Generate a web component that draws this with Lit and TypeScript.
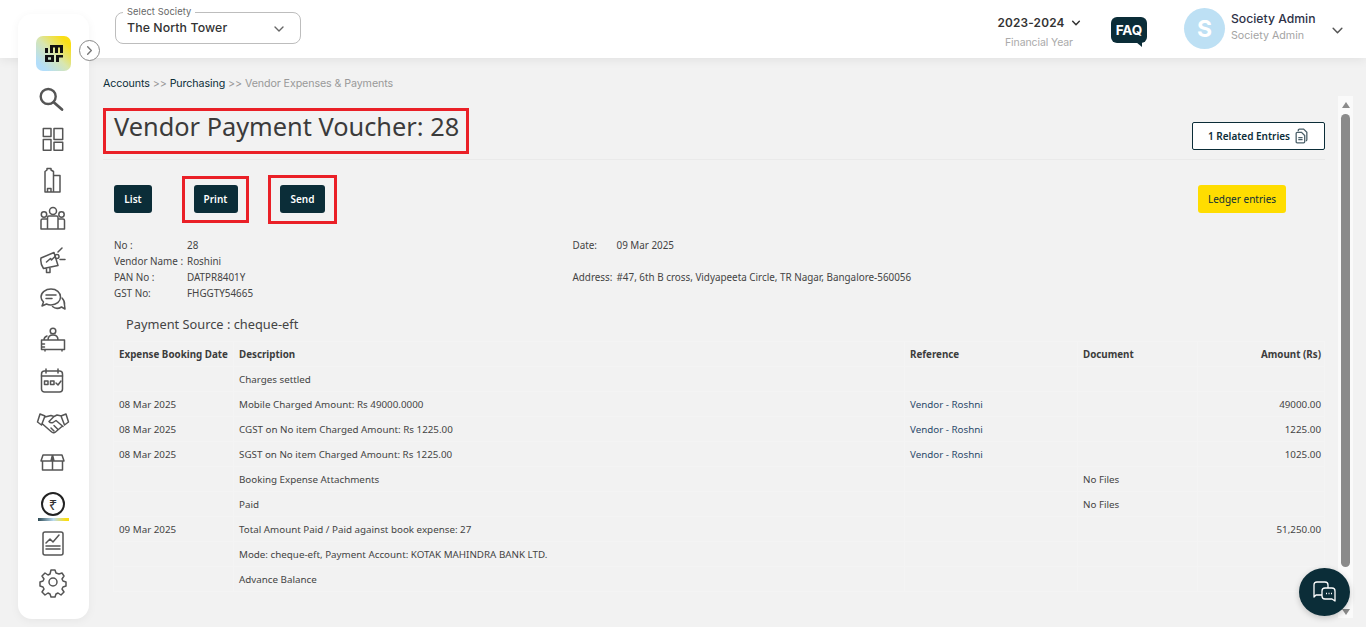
import { LitElement, html, css, svg } from "lit";
import { customElement } from "lit/decorators.js";

const chev = (w: number, sw = 1.6, c = "#333") => html`<svg width=${w} height=${w} viewBox="0 0 12 12" fill="none" stroke=${c} stroke-width=${sw} stroke-linecap="round" stroke-linejoin="round"><path d="M2 4l4 4 4-4"/></svg>`;

const icons = [
  svg`<circle cx="10.200" cy="12.500" r="7.500" stroke-width="2.400"/><path d="M16 18.500l8 7" stroke-width="2.800"/>`,
  svg`<rect x="5.300" y="4.500" width="7.700" height="8"/><rect x="16" y="4.500" width="8.700" height="11"/><rect x="5.300" y="15.500" width="7.700" height="10.700"/><rect x="16" y="18.200" width="8.700" height="8"/>`,
  svg`<path d="M7 27V6.500l2-1.500V3.500h4V5l2.500 1.500V27zM15.500 10.500H22V27h-6.500M7 27h15M9.500 27v-3.500h3.500V27"/>`,
  svg`<circle cx="15" cy="6" r="3.500"/><circle cx="6" cy="9.500" r="2.700"/><circle cx="23.500" cy="9.500" r="2.700"/><path d="M3 24v-8.500q0-1.500 1.500-1.500H9M26.500 24v-8.500q0-1.500-1.500-1.500h-4.500M9.500 24V12.500q0-1.500 1.500-1.500h7.500q1.500 0 1.500 1.500V24M3 24h23.500"/>`,
  svg`<path d="M3 13l13-5.500 4 13-14.500 3q-3.500-5-2.500-10.500zM8.500 23.500v4h3.500v-5M8.500 17l4-3.500 1 1.500 3-3M20 7l4-4M22 14.500h5"/><circle cx="19" cy="11.500" r="2"/>`,
  svg`<path d="M13 3c5.500 0 9.500 3.500 9.500 8s-4 8-9.500 8q-2.500 0-4.500-1l-4.500 2 1.500-4q-2.500-2.500-2.500-5c0-4.500 4.500-8 10-8zM8 9h10M8 12.500h6"/><path d="M24 12q3 3 2.500 7l.5 4-3.500-2q-5 3-9-.5"/>`,
  svg`<circle cx="15" cy="5" r="2.800"/><path d="M10 14q0-5 5-5t5 5M9 10q-3 1-3 4M3.500 14h23v9.500h-23zM3.500 18h3M3.500 21h3M7 23.500V25M24 23.500V25"/>`,
  svg`<rect x="3.500" y="5" width="21" height="21" rx="3"/><path d="M8 3v4M20 3v4M3.500 10h21"/><rect x="6.500" y="15" width="3.500" height="3.500"/><rect x="12.500" y="15" width="3.500" height="3.500"/><path d="M18 17l2 2 3-4"/>`,
  svg`<path d="M2 7l5 2-3.500 9L-.500 15zM28 7l-5 2 3.500 9 4-3zM7 10l6-1.500 3 1 3-1.500 4.500 1M16 9.500l-5 5q1.500 2 4 1l3-2 7 6M4.500 17l8 7q3 3 5 1l7-6M13 21l3 3M16 18.500l3.500 3.500" />`,
  svg`<path d="M5 8h19l2 6H3zM4.500 14v9h20v-9M14.500 8v15M14.500 8l-1.500 6M14.500 8l1.500 6"/>`,
];

const rows: [string, string, string, string, string][] = [
  ["", "Charges settled", "", "", ""],
  ["08 Mar 2025", "Mobile Charged Amount: Rs 49000.0000", "Vendor - Roshni", "", "49000.00"],
  ["08 Mar 2025", "CGST on No item Charged Amount: Rs 1225.00", "Vendor - Roshni", "", "1225.00"],
  ["08 Mar 2025", "SGST on No item Charged Amount: Rs 1225.00", "Vendor - Roshni", "", "1025.00"],
  ["", "Booking Expense Attachments", "", "No Files", ""],
  ["", "Paid", "", "No Files", ""],
  ["09 Mar 2025", "Total Amount Paid / Paid against book expense: 27", "", "", "51,250.00"],
  ["", "Mode: cheque-eft, Payment Account: KOTAK MAHINDRA BANK LTD.", "", "", ""],
  ["", "Advance Balance", "", "", ""],
];

@customElement("app-root")
export class AppRoot extends LitElement {
  static styles = css`
    :host { display: block; height: 627px; width: 1366px; overflow: hidden; position: relative; background: #f2f2f2; font-family: "Noto Sans", sans-serif; color: #3c3c3c; }
    * { box-sizing: border-box; }
    header { height: 58px; background: #fff; box-shadow: 0 2px 10px rgba(0,0,0,.07); display: flex; align-items: center; padding-left: 115px; position: relative; }
    .select { width: 186px; height: 32px; margin-top: -2px; border: 1px solid #bdbdbd; border-radius: 8px; position: relative; display: flex; align-items: center; justify-content: space-between; padding: 0 15px 2px 11px; font: 500 12.300px Inter, sans-serif; color: #333; letter-spacing: .1px; }
    .select label { position: absolute; left: 7px; top: -7px; background: #fff; padding: 0 4px; font: 400 9.300px Inter, sans-serif; color: #666; line-height: 11px; }
    .select svg { margin-top: 3px; }
    .fy { width: 90px; display: flex; flex-direction: column; align-items: center; }
    .fyw { margin-left: auto; margin-top: 4px; margin-right: 27px; }
    .fy .y { display: flex; align-items: center; gap: 6px; font: 600 11.800px Inter, sans-serif; color: #333; letter-spacing: .2px; height: 18px; }
    .fy .s { font: 400 10.500px Inter, sans-serif; color: #aaa; margin-top: 4px; letter-spacing: -.1px; }
    .faq { width: 36px; height: 26px; margin-right: 37px; margin-top: 2px; position: relative; background: #0b2d38; border-radius: 6px; color: #fff; font: 700 13.500px Inter, sans-serif; display: flex; align-items: center; justify-content: center; }
    .faq::after { content: ""; position: absolute; right: 5px; bottom: -4px; border-left: 6px solid transparent; border-top: 5px solid #0b2d38; }
    .avatar { width: 41px; height: 41px; margin-top: -1px; border-radius: 50%; background: #bde0f4; color: #fff; font: 700 23px Inter, sans-serif; display: flex; align-items: center; justify-content: center; }
    .who { margin-left: 6px; width: 100px; display: flex; flex-direction: column; margin-top: -4px; }
    .who b { font: 500 12.200px Inter, sans-serif; color: #2e3147; line-height: 17px; }
    .who i { font: 400 10.700px Inter, sans-serif; color: #a4a4a4; line-height: 17px; font-style: normal; }
    .userchev { margin-right: 22px; margin-top: 2px; display: flex; }

    .side { position: absolute; left: 18px; top: 14px; width: 71px; height: 605px; background: #fff; border-radius: 14px; box-shadow: 0 2px 10px rgba(0,0,0,.05); display: flex; flex-direction: column; align-items: center; padding-top: 22px; }
    .logo { width: 35px; height: 35px; border-radius: 7px; background: linear-gradient(45deg, #b3defa 15%, #d8e6b0 50%, #fade15 85%); display: flex; align-items: center; justify-content: center; }
    .toggle { position: absolute; left: 61px; top: 26px; width: 21px; height: 21px; border: 1px solid #888; border-radius: 50%; background: #fff; display: flex; align-items: center; justify-content: center; }
    .nav { margin: 13px 1px 0 0; display: flex; flex-direction: column; align-items: center; gap: 10.350px; }
    .nav svg, .lower svg { display: block; width: 30px; height: 30px; fill: none; stroke: #555; stroke-width: 1.500; stroke-linejoin: round; stroke-linecap: round; overflow: visible; }
    .rupee { width: 24px; height: 24px; border: 2px solid #222; border-radius: 50%; display: flex; align-items: center; justify-content: center; font: 400 15px "Noto Sans", sans-serif; color: #333; margin: 15px 1px 0 0; }
    .bar { width: 31px; height: 3px; margin: 2px 1px 0 0; background: linear-gradient(90deg, #2d4a55, #bcdcef 50%, #fade15 90%); }
    .lower { margin: 8px 1px 0 0; display: flex; flex-direction: column; align-items: center; gap: 8px; }

    main { padding: 0 0 0 103px; }
    .crumb { padding-top: 19px; font: 400 10.700px Inter, sans-serif; line-height: 14px; letter-spacing: -.1px; color: #999; }
    .crumb b { font-weight: 400; color: #0b2d38; }
    .head { display: flex; align-items: flex-start; justify-content: space-between; margin-top: 17px; width: 1222px; border-bottom: 1px solid #eaeaea; height: 52px; }
    .title { border: 3px solid #ea2027; height: 46px; padding: 0 7px 0 8px; font-size: 25.350px; line-height: 30px; color: #3b3b3b; font-weight: 400; margin: 0; }
    .rel { margin-top: 14px; width: 133px; height: 28px; border: 1px solid #0b2d38; border-radius: 2px; display: flex; align-items: center; justify-content: center; gap: 4px; font-size: 10px; font-weight: 600; color: #0b2d38; background: #fff; }
    .acts { display: flex; width: 1183px; margin: 14px 0 0 0; align-items: center; height: 50px; }
    .btn { height: 28px; background: #0b2d38; color: #fff; border-radius: 3px; font-size: 10px; font-weight: 600; display: flex; align-items: center; justify-content: center; }
    .box { border: 3px solid #ea2027; display: flex; align-items: center; justify-content: center; }
    .list { width: 38px; margin-left: 11px; }
    .pb { width: 67px; height: 47px; margin-left: 30px; }
    .print { width: 44px; }
    .sb { width: 69px; height: 49px; margin-left: 19px; }
    .send { width: 45px; }
    .ledger { margin-left: auto; width: 88px; background: #ffdd00; color: #0b2d38; font-weight: 400; }
    .info { margin: 13px 0 0 11px; display: grid; grid-template-columns: 73px 385.500px 44px 1fr; grid-auto-rows: 16px; font-size: 9.870px; line-height: 16px; color: #444; width: 1100px; }
    .src { font-size: 12.800px; margin: 14px 0 0 23px; line-height: 19px; color: #444; }
    table { margin: 7px 0 0 10px; border-collapse: collapse; width: 1212px; table-layout: fixed; font-size: 9.800px; color: #444; }
    th { font-weight: 700; text-align: left; height: 25px; padding: 0 5px; color: #3c3c3c; white-space: nowrap; border: 1px solid #f4f4f4; }
    td { height: 25px; padding: 0 5px; white-space: nowrap; border: 1px solid #f4f4f4; }
    .r { text-align: right; padding-right: 3px; }
    .ref { color: #2b4a6b; }
    .sbar { position: absolute; right: 13px; top: 96px; width: 15px; height: 522px; background: #fafafa; display: flex; flex-direction: column; align-items: center; }
    .sbar .up { margin-top: 6px; border: 4.500px solid transparent; border-bottom: 6px solid #8a8a8a; border-top: 0; }
    .sbar .th { width: 9px; margin-top: 6px; height: 453px; background: #8a8a8a; border-radius: 5px; }
    .sbar .dn { margin-top: auto; margin-bottom: 3px; border: 4.500px solid transparent; border-top: 6px solid #8a8a8a; border-bottom: 0; }
    .chat { position: absolute; left: 1299px; top: 568px; width: 51px; height: 48px; border-radius: 50%; background: #0b2d38; box-shadow: 0 2px 6px rgba(0,0,0,.2); display: flex; align-items: center; justify-content: center; }
  `;

  render() {
    return html`
      <header>
        <div class="select"><label>Select Society</label><span>The North Tower</span>${chev(12, 1.400, "#666")}</div>
        <div class="fyw fy"><div class="y">2023-2024 ${chev(10, 1.800)}</div><div class="s">Financial Year</div></div>
        <div class="faq">FAQ</div>
        <div class="avatar">S</div>
        <div class="who"><b>Society Admin</b><i>Society Admin</i></div>
        <div class="userchev">${chev(13, 1.400, "#555")}</div>
      </header>
      <main>
        <div class="crumb"><b>Accounts</b> &gt;&gt; <b>Purchasing</b> &gt;&gt; Vendor Expenses &amp; Payments</div>
        <div class="head">
          <h1 class="title">Vendor Payment Voucher: 28</h1>
          <div class="rel">1 Related Entries
            <svg width="15" height="16" viewBox="0 0 14 15" fill="none" stroke="#4a5f68" stroke-width="1.200"><path d="M4 3V2q0-1 1-1h4l3 3v7q0 1-1 1"/><path d="M2 5q0-1 1-1h4l3 3v6q0 1-1 1H3q-1 0-1-1zM4 9h4M4 11h4"/></svg>
          </div>
        </div>
        <div class="acts">
          <div class="btn list">List</div>
          <div class="box pb"><div class="btn print">Print</div></div>
          <div class="box sb"><div class="btn send">Send</div></div>
          <div class="btn ledger">Ledger entries</div>
        </div>
        <div class="info">
          <span>No :</span><span>28</span><span>Date:</span><span>09 Mar 2025</span>
          <span>Vendor Name :</span><span>Roshini</span><span></span><span></span>
          <span>PAN No :</span><span>DATPR8401Y</span><span>Address:</span><span>#47, 6th B cross, Vidyapeeta Circle, TR Nagar, Bangalore-560056</span>
          <span>GST No:</span><span>FHGGTY54665</span><span></span><span></span>
        </div>
        <div class="src">Payment Source : cheque-eft</div>
        <table>
          <colgroup><col style="width:120px"/><col style="width:671px"/><col style="width:173px"/><col style="width:120px"/><col/></colgroup>
          <thead><tr><th>Expense Booking Date</th><th>Description</th><th>Reference</th><th>Document</th><th class="r">Amount (Rs)</th></tr></thead>
          <tbody>
            ${rows.map((r) => html`<tr><td>${r[0]}</td><td>${r[1]}</td><td class="ref">${r[2]}</td><td>${r[3]}</td><td class="r">${r[4]}</td></tr>`)}
          </tbody>
        </table>
      </main>
      <nav class="side">
        <div class="logo">
          <svg width="18" height="17" viewBox="0 0 18 17" fill="#111"><path d="M5 0h13v8h-3V2.500h-2V8h-3V2.500H8V8H5zM0 3h3v5H0zM0 10h9v7H0zM3 12.200v2.600h3v-2.600zM11 10h7v2.500h-4V17h-3z"/></svg>
        </div>
        <div class="toggle"><svg width="11" height="11" viewBox="0 0 12 12" fill="none" stroke="#777" stroke-width="1.500" stroke-linecap="round" stroke-linejoin="round"><path d="M4 2l4 4-4 4"/></svg></div>
        <div class="nav">${icons.map((i) => html`<svg viewBox="0 0 30 30">${i}</svg>`)}</div>
        <div class="rupee">₹</div>
        <div class="bar"></div>
        <div class="lower">
          <svg viewBox="0 0 30 30"><rect x="5" y="3" width="20" height="23" rx="2"/><path d="M8 14l4-4 3 3 6-7M8 17h14M8 20h14"/></svg>
          <svg viewBox="0 0 30 30"><circle cx="15" cy="15" r="4"/><path d="M13 3h4l1 3 3 1 3-1 2 3-2 3 1 2 3 1v4l-3 1-1 2 2 3-3 3-3-2-2 1-1 3h-4l-1-3-2-1-3 2-3-3 2-3-1-2-3-1v-4l3-1 1-2-2-3 3-3 3 2 2-1z"/></svg>
        </div>
      </nav>
      <div class="sbar"><div class="up"></div><div class="th"></div><div class="dn"></div></div>
      <div class="chat">
        <svg width="26" height="26" viewBox="0 0 26 26" fill="none" stroke="#fff" stroke-width="1.300" stroke-linejoin="round"><path d="M10 16H4l-2 2V6q0-3 3-3h8q3 0 3 3v3"/><path d="M10 12q0-3 3-3h7q3 0 3 3v10l-3-2h-7q-3 0-3-3z"/><path d="M14 14.500h1M16.500 14.500h1M19 14.500h1" stroke-width="1.500"/></svg>
      </div>
    `;
  }
}
